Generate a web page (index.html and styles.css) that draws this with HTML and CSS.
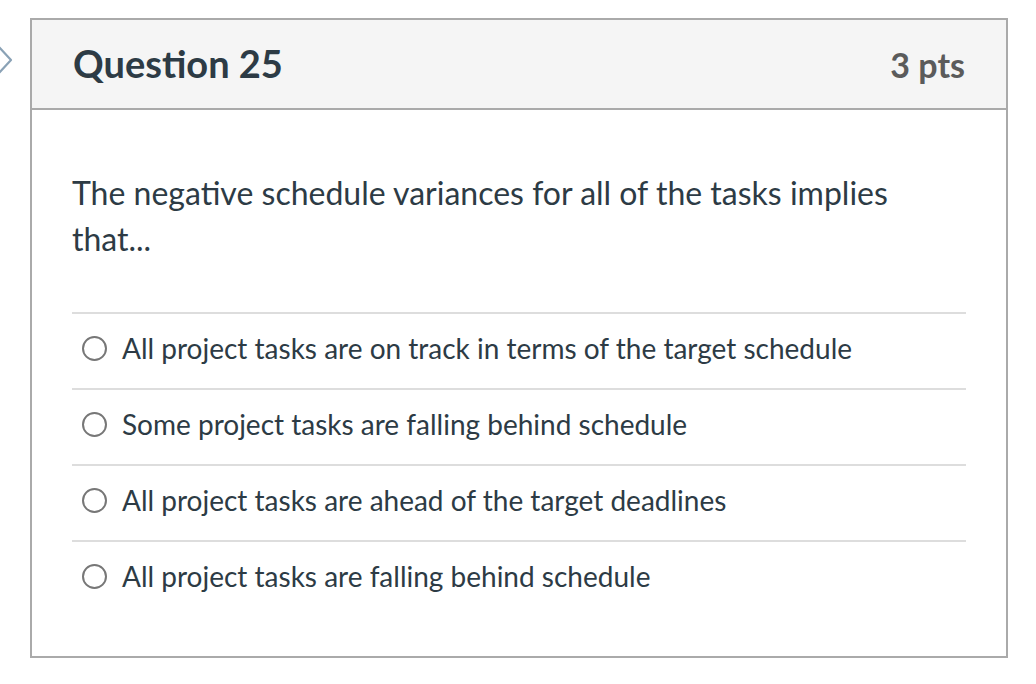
FILE: index.html
```html
<!DOCTYPE html>
<html>
<head>
<meta charset="utf-8">
<link rel="stylesheet" href="styles.css">
</head>
<body>
<div class="page">
  <div class="flag">
    <svg width="14" height="32" viewBox="0 0 14 32"><polyline points="-2,2 11,16 -2,30" fill="none" stroke="#8aa2b6" stroke-width="2.2" stroke-linejoin="round"/></svg>
  </div>
  <div class="card">
    <div class="card-header">
      <h2 class="title">Question 25</h2>
      <span class="pts">3 pts</span>
    </div>
    <div class="card-body">
      <p class="question">The negative schedule variances for all of the tasks implies that...</p>
      <div class="answers">
        <label class="answer"><span class="radio"></span><span class="answer-text">All project tasks are on track in terms of the target schedule</span></label>
        <label class="answer"><span class="radio"></span><span class="answer-text">Some project tasks are falling behind schedule</span></label>
        <label class="answer"><span class="radio"></span><span class="answer-text">All project tasks are ahead of the target deadlines</span></label>
        <label class="answer"><span class="radio"></span><span class="answer-text">All project tasks are falling behind schedule</span></label>
      </div>
    </div>
  </div>
</div>
</body>
</html>
```

FILE: styles.css
```css
html, body {
  margin: 0;
  padding: 0;
  background: #ffffff;
}
body {
  font-family: Lato, "Liberation Sans", sans-serif;
  color: #2d3b45;
}
.page {
  position: relative;
  padding: 18px 28px 0 30px;
}
.flag {
  position: absolute;
  left: 0;
  top: 44px;
  width: 14px;
  height: 32px;
}
.card {
  width: 974px;
  border: 2px solid #aaaaaa;
}
.card-header {
  display: flex;
  align-items: center;
  justify-content: space-between;
  height: 88px;
  padding: 0 41px;
  background: #f5f5f5;
  border-bottom: 2px solid #aaaaaa;
}
.title {
  margin: 0;
  font-size: 38px;
  font-weight: 700;
  color: #2d3b45;
  position: relative;
  top: -1px;
}
.pts {
  font-size: 34px;
  font-weight: 700;
  color: #5b5b5b;
}
.card-body {
  padding: 60px 40px 40px;
}
.question {
  margin: 0 0 50px;
  font-size: 32px;
  line-height: 46px;
}
.answers {
  display: flex;
  flex-direction: column;
}
.answer {
  box-sizing: border-box;
  display: flex;
  align-items: center;
  gap: 15px;
  height: 76px;
  padding: 0 0 6px 10px;
  border-top: 2px solid #dddddd;
}
.radio {
  box-sizing: border-box;
  width: 25px;
  height: 25px;
  border: 2px solid #777777;
  border-radius: 50%;
  flex: none;
}
.answer-text {
  font-size: 28px;
  color: #2d3b45;
}
```
